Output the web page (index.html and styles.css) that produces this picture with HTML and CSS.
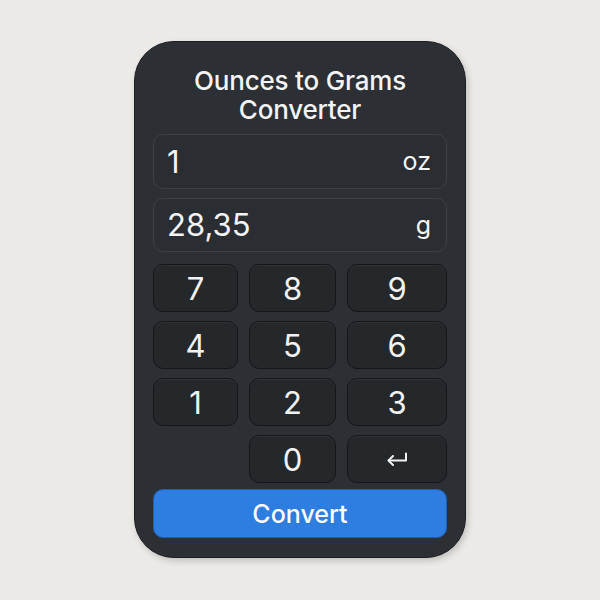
FILE: index.html
```html
<!DOCTYPE html>
<html lang="en">
<head>
  <meta charset="UTF-8" />
  <meta name="viewport" content="width=device-width, initial-scale=1.0" />
  <title>Ounces to Grams Converter</title>
  <link rel="stylesheet" href="styles.css">
</head>
<body>
  <!-- ============================
       Converter Card
       ============================ -->
  <main class="converter">
    <h1 class="converter-title">Ounces to Grams<br>Converter</h1>

    <!-- Value fields -->
    <div class="field">
      <span class="field-value">1</span>
      <span class="field-unit">oz</span>
    </div>
    <div class="field">
      <span class="field-value">28,35</span>
      <span class="field-unit">g</span>
    </div>

    <!-- Keypad -->
    <div class="keypad">
      <button class="key">7</button>
      <button class="key">8</button>
      <button class="key">9</button>
      <button class="key">4</button>
      <button class="key">5</button>
      <button class="key">6</button>
      <button class="key">1</button>
      <button class="key">2</button>
      <button class="key">3</button>
      <span class="key-spacer"></span>
      <button class="key">0</button>
      <button class="key key-back" aria-label="Backspace">
        <svg width="22" height="14" viewBox="0 0 22 14" fill="none" stroke="#f2f2f2" stroke-width="2" stroke-linecap="round" stroke-linejoin="round">
          <path d="M20 1.5v7H3" />
          <path d="M7 4L2.5 8.5 7 13" />
        </svg>
      </button>
    </div>

    <button class="convert-btn">Convert</button>
  </main>
</body>
</html>
```

FILE: styles.css
```css
/* ============================
   Basic Reset
   ============================ */
* {
  margin: 0;
  padding: 0;
  box-sizing: border-box;
}

body {
  background-color: #ebeae6;
  font-family: Inter, "Noto Sans", "Liberation Sans", sans-serif;
  color: #f4f4f4;
  height: 600px;
  display: flex;
  justify-content: center;
  padding-top: 41px;
}

/* ============================
   Card
   ============================ */
.converter {
  width: 332px;
  height: 517px;
  background-color: #2c2f33;
  border-radius: 40px;
  padding: 24px 18px 19px;
  border: 1px solid #1c1e21;
  box-shadow: 2px 3px 6px rgba(0, 0, 0, 0.18);
  display: flex;
  flex-direction: column;
}

.converter-title {
  font-size: 26px;
  font-weight: 500;
  line-height: 29px;
  text-align: center;
  letter-spacing: -0.2px;
  margin-bottom: 10px;
}

/* ============================
   Value Fields
   ============================ */
.field {
  height: 55px;
  display: flex;
  justify-content: space-between;
  align-items: center;
  padding: 0 15px 0 13px;
  background-color: #2a2d31;
  border: 1px solid #3d4045;
  border-radius: 10px;
  margin-bottom: 9px;
}

.field-value {
  font-size: 31px;
  font-weight: 400;
}

.field-unit {
  font-size: 25px;
  font-weight: 400;
}

/* ============================
   Keypad
   ============================ */
.keypad {
  display: grid;
  grid-template-columns: 85fr 87fr 100fr;
  grid-auto-rows: 48px;
  column-gap: 11px;
  row-gap: 9px;
  margin-top: 3px;
}

.key {
  background-color: #25282b;
  border: 1px solid #141618;
  border-radius: 10px;
  box-shadow: inset 0 1px 0 rgba(255, 255, 255, 0.06);
  color: #f2f2f2;
  font-family: inherit;
  font-size: 31px;
  font-weight: 400;
  cursor: pointer;
  display: flex;
  justify-content: center;
  align-items: center;
}

.key:hover {
  background-color: #2f3236;
}

/* ============================
   Convert Button
   ============================ */
.convert-btn {
  margin-top: 6px;
  height: 49px;
  background-color: #2e7de0;
  border: 1px solid #1e5fb3;
  border-radius: 10px;
  color: #ffffff;
  font-family: inherit;
  font-size: 25px;
  font-weight: 500;
  cursor: pointer;
}
```
